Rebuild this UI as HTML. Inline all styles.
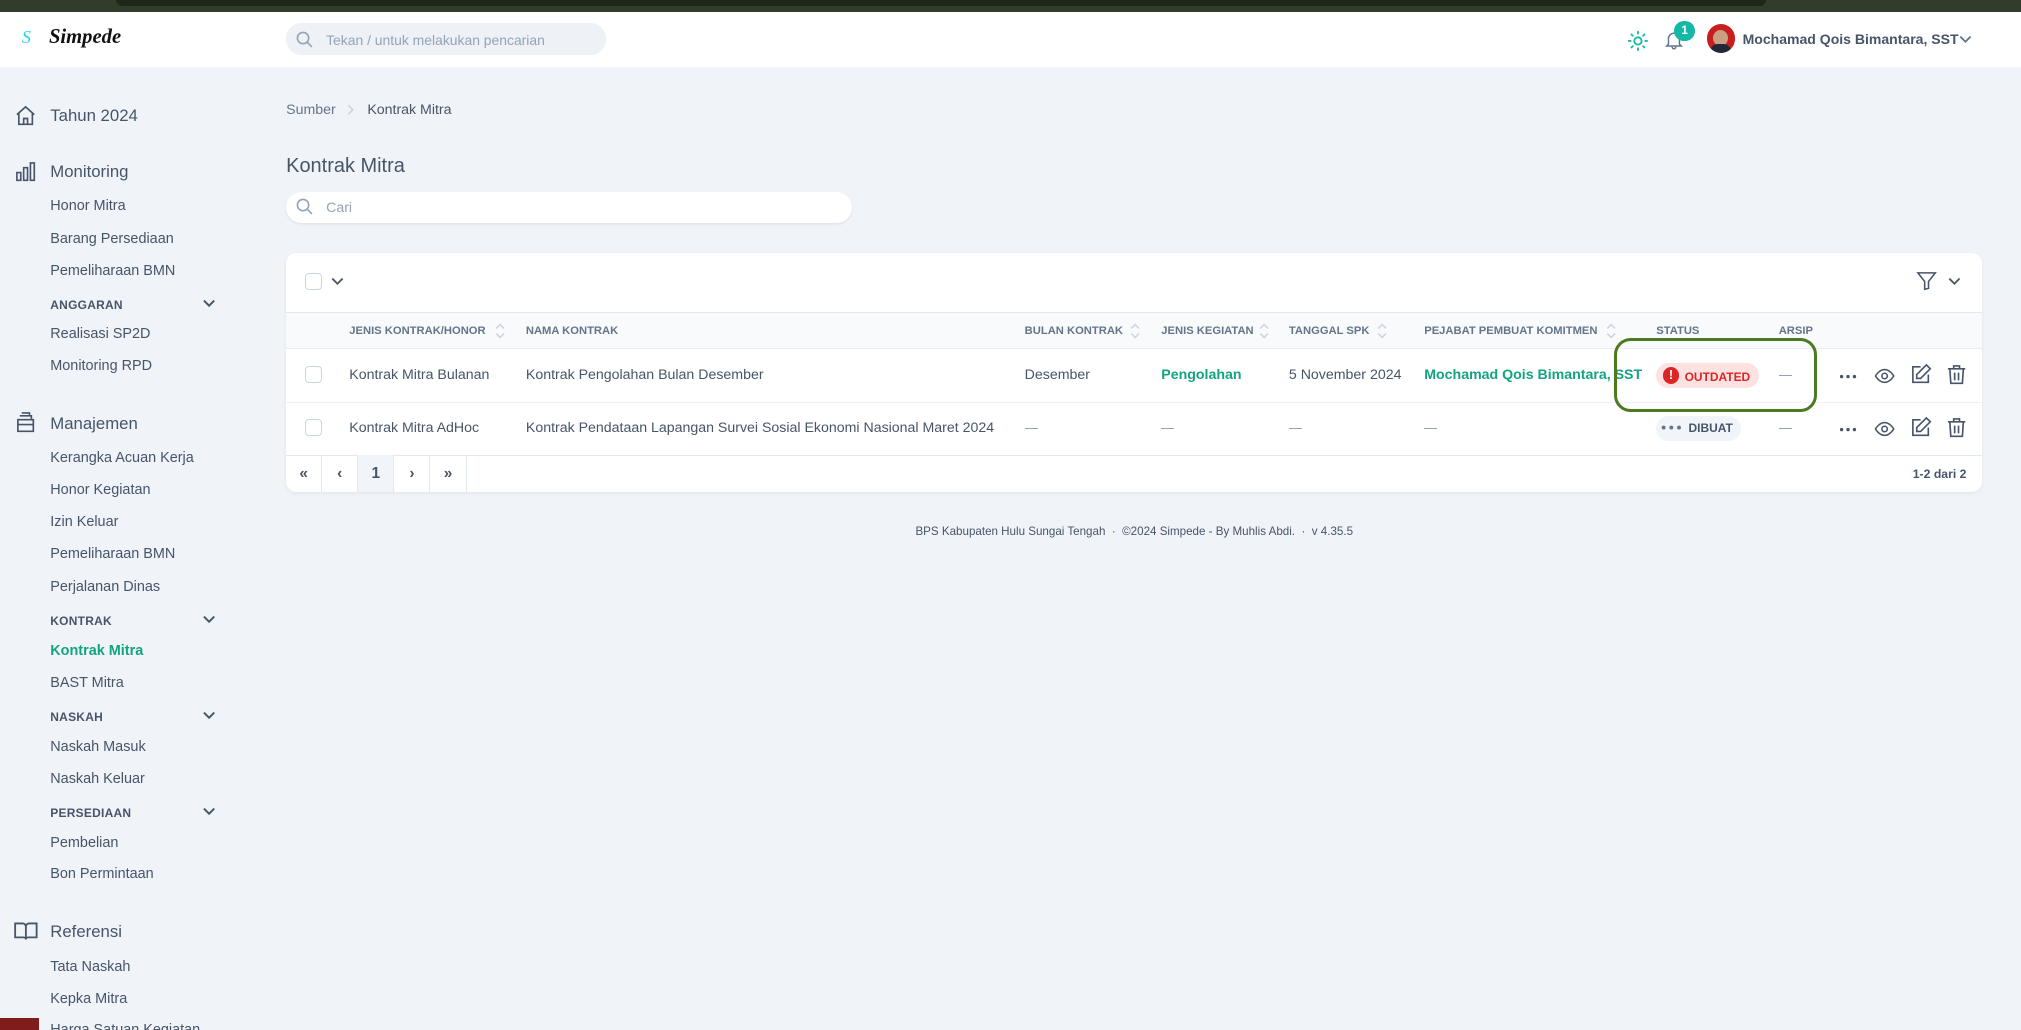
<!DOCTYPE html>
<html><head><meta charset="utf-8">
<style>
*{box-sizing:border-box;margin:0;padding:0}
html,body{width:2021px;height:1030px;overflow:hidden}
body{background:#f0f3f8;font-family:"Liberation Sans",sans-serif;color:#475569}
#w{zoom:1.28891;width:1568px;height:800px;position:relative;overflow:hidden}
.a{position:absolute;white-space:nowrap}
.top{left:0;top:0;width:1568px;height:9px;background:#323c2a}
.top2{left:90px;top:0;width:1280px;height:5px;background:#1e281a;border-radius:0 0 6px 6px}
.hdr{left:0;top:9px;width:1568px;height:43px;background:#fff}
.side{font-size:11.2px;color:#475569}
.grp{font-size:13px;color:#475569}
.cap{font-size:9.3px;font-weight:bold;color:#475569;letter-spacing:.2px}
.th{font-size:8.7px;font-weight:bold;color:#64748b;top:252px}
.td{font-size:11px;color:#475569}
.g{color:#14a37f;font-weight:bold}
.pg{top:353px;height:29px;width:28px;border-right:1px solid #e2e8f0;text-align:center;line-height:29px;font-size:12px;color:#475569;font-weight:bold}
.dash{width:10px;height:1px;background:#94a3b8}
.srt{top:250px}
</style></head><body><div id="w">
<div class="a top"></div><div class="a top2"></div>
<div class="a hdr"></div>
<div class="a" style="left:17px;top:21px;font-size:14px;color:#22d3ee;font-style:italic;font-family:'Liberation Serif',serif">S</div>
<div class="a" style="left:38px;top:20px;font-size:16px;font-weight:bold;font-style:italic;color:#111;font-family:'Liberation Serif',serif">Simpede</div>
<div class="a" style="left:222px;top:18px;width:248px;height:25px;background:#eef1f6;border-radius:12px"></div>
<svg class="a" style="left:229px;top:23px" width="15" height="15" viewBox="0 0 24 24" fill="none" stroke="#94a3b8" stroke-width="2"><circle cx="10" cy="10" r="7"/><path d="M15 15l6 6"/></svg>
<div class="a" style="left:253px;top:25px;font-size:10.8px;color:#94a3b8">Tekan / untuk melakukan pencarian</div>
<svg class="a" style="left:1262px;top:23px" width="17" height="17" viewBox="0 0 24 24" fill="none" stroke="#14b8a6" stroke-width="2" stroke-linecap="round"><circle cx="12" cy="12" r="4"/><path d="M12 2v2M12 20v2M2 12h2M20 12h2M4.9 4.9l1.4 1.4M17.7 17.7l1.4 1.4M4.9 19.1l1.4-1.4M17.7 6.3l1.4-1.4"/></svg>
<svg class="a" style="left:1290px;top:22px" width="17" height="18" viewBox="0 0 24 24" fill="none" stroke="#64748b" stroke-width="1.6"><path d="M6 17V11a6 6 0 0112 0v6l2 2H4z M10 20a2 2 0 004 0"/></svg>
<div class="a" style="left:1299px;top:16px;width:16px;height:16px;border-radius:50%;background:#14b8a6;color:#fff;font-size:9px;font-weight:bold;text-align:center;line-height:16px">1</div>
<div class="a" style="left:1324px;top:19px;width:22px;height:22px;border-radius:50%;background:#c81e1e;overflow:hidden"><div style="position:absolute;left:5px;top:4px;width:12px;height:13px;border-radius:50%;background:#c9a083"></div><div style="position:absolute;left:3px;top:15px;width:16px;height:10px;border-radius:6px 6px 0 0;background:#1f2937"></div></div>
<div class="a" style="left:1352px;top:24px;font-size:10.9px;font-weight:bold;color:#475569">Mochamad Qois Bimantara, SST</div>
<svg class="a" style="left:1520px;top:26px" width="10" height="8" viewBox="0 0 10 8" fill="none" stroke="#64748b" stroke-width="1.4"><path d="M1 2l4 4 4-4"/></svg>

<svg class="a" style="left:11px;top:81px" width="18" height="18" viewBox="0 0 24 24" fill="none" stroke="#475569" stroke-width="1.7"><path d="M3 11l9-8 9 8M5 9v12h14V9M10 21v-6h4v6"/></svg>
<div class="a grp" style="left:39px;top:82px">Tahun 2024</div>
<svg class="a" style="left:11px;top:124px" width="18" height="18" viewBox="0 0 24 24" fill="none" stroke="#475569" stroke-width="1.7"><path d="M3 21V13h4v8zM10 21V8h4v13zM17 21V3h4v18z"/></svg>
<div class="a grp" style="left:39px;top:126px">Monitoring</div>
<div class="a side" style="left:39px;top:154px">Honor Mitra</div>
<div class="a side" style="left:39px;top:179px">Barang Persediaan</div>
<div class="a side" style="left:39px;top:204px">Pemeliharaan BMN</div>
<div class="a cap" style="left:39px;top:231px">ANGGARAN</div>
<div class="a side" style="left:39px;top:253px">Realisasi SP2D</div>
<div class="a side" style="left:39px;top:278px">Monitoring RPD</div>
<svg class="a" style="left:11px;top:319px" width="18" height="18" viewBox="0 0 24 24" fill="none" stroke="#475569" stroke-width="1.7"><path d="M4 9h16v12H4zM6 5h12v4M8 2h8v3M4 14h16"/></svg>
<div class="a grp" style="left:39px;top:321px">Manajemen</div>
<div class="a side" style="left:39px;top:349px">Kerangka Acuan Kerja</div>
<div class="a side" style="left:39px;top:374px">Honor Kegiatan</div>
<div class="a side" style="left:39px;top:399px">Izin Keluar</div>
<div class="a side" style="left:39px;top:424px">Pemeliharaan BMN</div>
<div class="a side" style="left:39px;top:449px">Perjalanan Dinas</div>
<div class="a cap" style="left:39px;top:476px">KONTRAK</div>
<div class="a side g" style="left:39px;top:499px">Kontrak Mitra</div>
<div class="a side" style="left:39px;top:524px">BAST Mitra</div>
<div class="a cap" style="left:39px;top:551px">NASKAH</div>
<div class="a side" style="left:39px;top:573px">Naskah Masuk</div>
<div class="a side" style="left:39px;top:598px">Naskah Keluar</div>
<div class="a cap" style="left:39px;top:625px">PERSEDIAAN</div>
<div class="a side" style="left:39px;top:648px">Pembelian</div>
<div class="a side" style="left:39px;top:672px">Bon Permintaan</div>
<svg class="a" style="left:10px;top:714px" width="20" height="17" viewBox="0 0 24 20" fill="none" stroke="#475569" stroke-width="1.7"><path d="M2 3h7a3 3 0 013 3v12a2 2 0 00-2-2H2zM22 3h-7a3 3 0 00-3 3v12a2 2 0 012-2h8z"/></svg>
<div class="a grp" style="left:39px;top:715px">Referensi</div>
<div class="a side" style="left:39px;top:744px">Tata Naskah</div>
<div class="a side" style="left:39px;top:769px">Kepka Mitra</div>
<div class="a side" style="left:39px;top:793px">Harga Satuan Kegiatan</div>
<div class="a" style="left:0;top:790px;width:30px;height:10px;background:#7f1d1d"></div>
<svg class="a" style="left:157px;top:231px" width="11" height="8" viewBox="0 0 10 8" fill="none" stroke="#475569" stroke-width="1.5"><path d="M1 2l4 4 4-4"/></svg>
<svg class="a" style="left:157px;top:476px" width="11" height="8" viewBox="0 0 10 8" fill="none" stroke="#475569" stroke-width="1.5"><path d="M1 2l4 4 4-4"/></svg>
<svg class="a" style="left:157px;top:551px" width="11" height="8" viewBox="0 0 10 8" fill="none" stroke="#475569" stroke-width="1.5"><path d="M1 2l4 4 4-4"/></svg>
<svg class="a" style="left:157px;top:625px" width="11" height="8" viewBox="0 0 10 8" fill="none" stroke="#475569" stroke-width="1.5"><path d="M1 2l4 4 4-4"/></svg>

<div class="a" style="left:222px;top:79px;font-size:11px;color:#64748b">Sumber</div>
<svg class="a" style="left:269px;top:81px" width="6" height="9" viewBox="0 0 6 9" fill="none" stroke="#cbd5e1" stroke-width="1.2"><path d="M1 1l3.5 3.5L1 8"/></svg>
<div class="a" style="left:285px;top:79px;font-size:11px;color:#475569">Kontrak Mitra</div>
<div class="a" style="left:222px;top:120px;font-size:15.5px;color:#475569">Kontrak Mitra</div>
<div class="a" style="left:222px;top:149px;width:439px;height:24px;background:#fff;border-radius:12px;box-shadow:0 1px 2px rgba(0,0,0,.08)"></div>
<svg class="a" style="left:229px;top:153px" width="15" height="15" viewBox="0 0 24 24" fill="none" stroke="#94a3b8" stroke-width="2"><circle cx="10" cy="10" r="7"/><path d="M15 15l6 6"/></svg>
<div class="a" style="left:253px;top:155px;font-size:11px;color:#94a3b8">Cari</div>

<div class="a" style="left:222px;top:196px;width:1316px;height:186px;background:#fff;border-radius:8px;box-shadow:0 1px 3px rgba(0,0,0,.06);overflow:hidden">
 <div class="a" style="left:0;top:46px;width:1316px;height:29px;background:#f8fafc;border-top:1px solid #e2e8f0;border-bottom:1px solid #e8edf3"></div>
 <div class="a" style="left:0;top:116px;width:1316px;height:1px;background:#eef2f6"></div>
 <div class="a" style="left:0;top:157px;width:1316px;height:1px;background:#e2e8f0"></div>
</div>
<div class="a" style="left:237px;top:212px;width:13px;height:13px;border:1px solid #cbd5e1;border-radius:3px;background:#fff"></div>
<svg class="a" style="left:257px;top:214px" width="10" height="8" viewBox="0 0 10 8" fill="none" stroke="#475569" stroke-width="1.4"><path d="M1 2l4 4 4-4"/></svg>
<svg class="a" style="left:1486px;top:209px" width="18" height="18" viewBox="0 0 24 24" fill="none" stroke="#475569" stroke-width="1.6"><path d="M3 4h18l-7 9v7l-4 1v-8z"/></svg>
<svg class="a" style="left:1511px;top:214px" width="10" height="8" viewBox="0 0 10 8" fill="none" stroke="#475569" stroke-width="1.4"><path d="M1 2l4 4 4-4"/></svg>

<div class="a th" style="left:271px">JENIS KONTRAK/HONOR</div>
<div class="a th" style="left:408px">NAMA KONTRAK</div>
<div class="a th" style="left:795px">BULAN KONTRAK</div>
<div class="a th" style="left:901px">JENIS KEGIATAN</div>
<div class="a th" style="left:1000px">TANGGAL SPK</div>
<div class="a th" style="left:1105px">PEJABAT PEMBUAT KOMITMEN</div>
<div class="a th" style="left:1285px">STATUS</div>
<div class="a th" style="left:1380px">ARSIP</div>
<svg class="a srt" style="left:384px" width="8" height="14" viewBox="0 0 8 14" fill="none" stroke="#cbd5e1" stroke-width="1.2"><path d="M1 5l3-3 3 3M1 9l3 3 3-3"/></svg>
<svg class="a srt" style="left:877px" width="8" height="14" viewBox="0 0 8 14" fill="none" stroke="#cbd5e1" stroke-width="1.2"><path d="M1 5l3-3 3 3M1 9l3 3 3-3"/></svg>
<svg class="a srt" style="left:977px" width="8" height="14" viewBox="0 0 8 14" fill="none" stroke="#cbd5e1" stroke-width="1.2"><path d="M1 5l3-3 3 3M1 9l3 3 3-3"/></svg>
<svg class="a srt" style="left:1068px" width="8" height="14" viewBox="0 0 8 14" fill="none" stroke="#cbd5e1" stroke-width="1.2"><path d="M1 5l3-3 3 3M1 9l3 3 3-3"/></svg>
<svg class="a srt" style="left:1246px" width="8" height="14" viewBox="0 0 8 14" fill="none" stroke="#cbd5e1" stroke-width="1.2"><path d="M1 5l3-3 3 3M1 9l3 3 3-3"/></svg>

<div class="a" style="left:237px;top:284px;width:13px;height:13px;border:1px solid #cbd5e1;border-radius:3px"></div>
<div class="a td" style="left:271px;top:285px">Kontrak Mitra Bulanan</div>
<div class="a td" style="left:408px;top:285px">Kontrak Pengolahan Bulan Desember</div>
<div class="a td" style="left:795px;top:285px">Desember</div>
<div class="a td g" style="left:901px;top:285px">Pengolahan</div>
<div class="a td" style="left:1000px;top:285px">5 November 2024</div>
<div class="a td g" style="left:1105px;top:285px">Mochamad Qois Bimantara, SST</div>
<div class="a" style="left:1285px;top:282px;width:80px;height:19px;border-radius:10px;background:#fee2e2"></div>
<div class="a" style="left:1290px;top:285px;width:13px;height:13px;border-radius:50%;background:#dc2626;color:#fff;font-size:10px;font-weight:bold;text-align:center;line-height:13px">!</div>
<div class="a" style="left:1307px;top:287px;font-size:9.3px;font-weight:bold;color:#dc2626">OUTDATED</div>
<div class="a dash" style="left:1380px;top:291px"></div>

<div class="a" style="left:237px;top:325px;width:13px;height:13px;border:1px solid #cbd5e1;border-radius:3px"></div>
<div class="a td" style="left:271px;top:326px">Kontrak Mitra AdHoc</div>
<div class="a td" style="left:408px;top:326px">Kontrak Pendataan Lapangan Survei Sosial Ekonomi Nasional Maret 2024</div>
<div class="a dash" style="left:795px;top:332px"></div>
<div class="a dash" style="left:901px;top:332px"></div>
<div class="a dash" style="left:1000px;top:332px"></div>
<div class="a dash" style="left:1105px;top:332px"></div>
<div class="a" style="left:1285px;top:323px;width:66px;height:19px;border-radius:10px;background:#f1f5f9"></div>
<svg class="a" style="left:1289px;top:330px" width="16" height="4" viewBox="0 0 16 4" fill="#64748b"><circle cx="2" cy="2" r="1.5"/><circle cx="8" cy="2" r="1.5"/><circle cx="14" cy="2" r="1.5"/></svg>
<div class="a" style="left:1310px;top:327px;font-size:9.3px;font-weight:bold;color:#475569">DIBUAT</div>
<div class="a dash" style="left:1380px;top:332px"></div>

<svg class="a" style="left:1427px;top:290px" width="14" height="4" viewBox="0 0 14 4" fill="#475569"><circle cx="2" cy="2" r="1.3"/><circle cx="7" cy="2" r="1.3"/><circle cx="12" cy="2" r="1.3"/></svg>
<svg class="a" style="left:1427px;top:331px" width="14" height="4" viewBox="0 0 14 4" fill="#475569"><circle cx="2" cy="2" r="1.3"/><circle cx="7" cy="2" r="1.3"/><circle cx="12" cy="2" r="1.3"/></svg>
<svg class="a" style="left:1453px;top:283px" width="18" height="17" viewBox="0 0 24 24" fill="none" stroke="#475569" stroke-width="1.7"><path d="M2 12s4-7 10-7 10 7 10 7-4 7-10 7S2 12 2 12z"/><circle cx="12" cy="12" r="3"/></svg>
<svg class="a" style="left:1453px;top:324px" width="18" height="17" viewBox="0 0 24 24" fill="none" stroke="#475569" stroke-width="1.7"><path d="M2 12s4-7 10-7 10 7 10 7-4 7-10 7S2 12 2 12z"/><circle cx="12" cy="12" r="3"/></svg>
<svg class="a" style="left:1481px;top:282px" width="18" height="18" viewBox="0 0 24 24" fill="none" stroke="#475569" stroke-width="1.7"><path d="M12 4H4v16h16v-8M18 2l4 4-10 10H8v-4z"/></svg>
<svg class="a" style="left:1481px;top:323px" width="18" height="18" viewBox="0 0 24 24" fill="none" stroke="#475569" stroke-width="1.7"><path d="M12 4H4v16h16v-8M18 2l4 4-10 10H8v-4z"/></svg>
<svg class="a" style="left:1509px;top:282px" width="18" height="18" viewBox="0 0 24 24" fill="none" stroke="#475569" stroke-width="1.7"><path d="M3 6h18M9 6V3h6v3M5 6l1 15h12l1-15M10 10v8M14 10v8"/></svg>
<svg class="a" style="left:1509px;top:323px" width="18" height="18" viewBox="0 0 24 24" fill="none" stroke="#475569" stroke-width="1.7"><path d="M3 6h18M9 6V3h6v3M5 6l1 15h12l1-15M10 10v8M14 10v8"/></svg>

<div class="a pg" style="left:222px">«</div>
<div class="a pg" style="left:250px">‹</div>
<div class="a pg" style="left:278px;background:#f1f5f9">1</div>
<div class="a pg" style="left:306px">›</div>
<div class="a pg" style="left:334px">»</div>
<div class="a" style="left:1484px;top:362px;font-size:9.5px;font-weight:bold;color:#475569">1-2 dari 2</div>

<div class="a" style="left:0;width:1760px;top:407px;text-align:center;font-size:9px;color:#475569">BPS Kabupaten Hulu Sungai Tengah &nbsp;·&nbsp; ©2024 Simpede - By Muhlis Abdi. &nbsp;·&nbsp; v 4.35.5</div>

<div class="a" style="left:1252px;top:262px;width:158px;height:58px;border:3px solid #4b7a23;border-radius:13px"></div>
</div></body></html>
